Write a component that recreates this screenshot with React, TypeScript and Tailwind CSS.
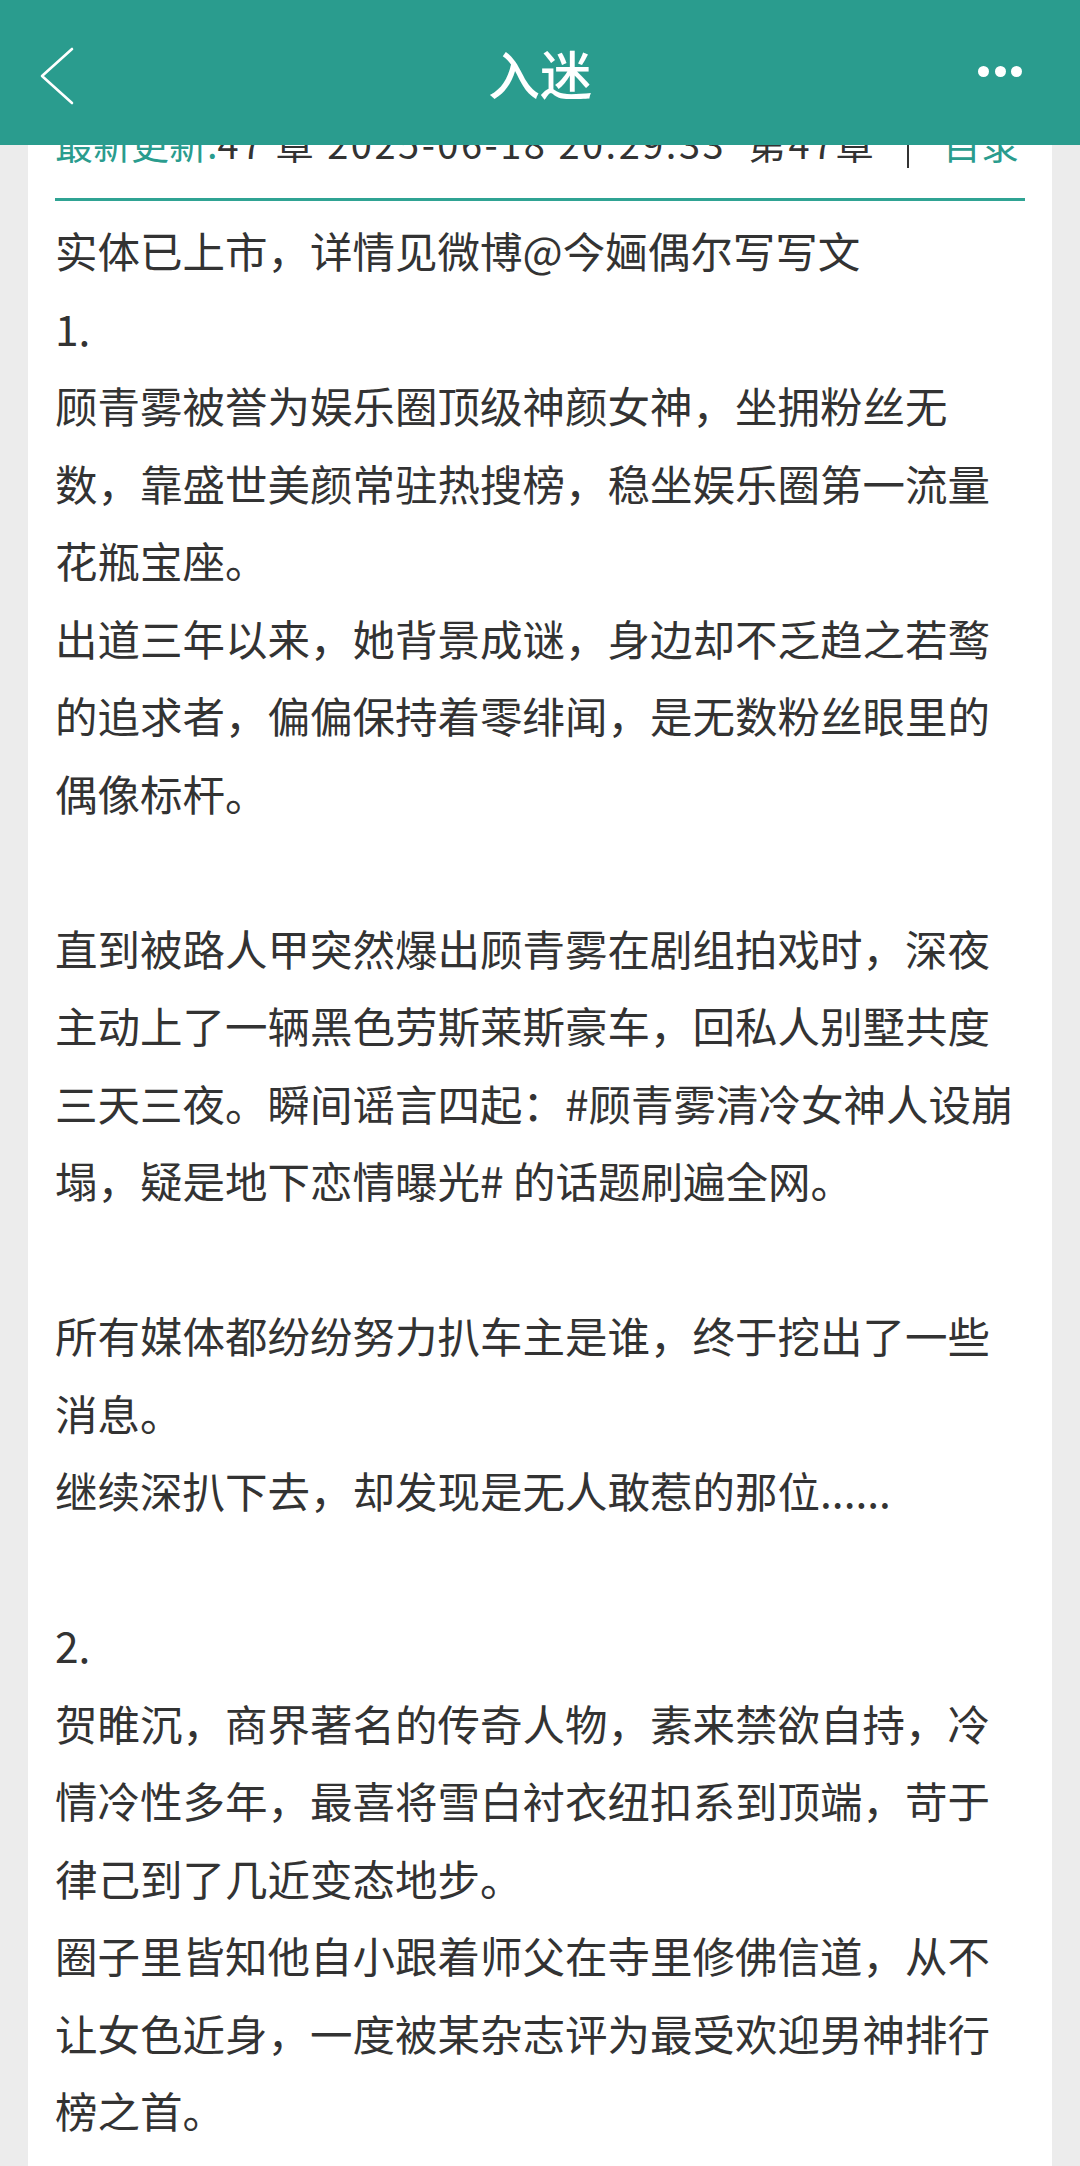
import React from 'react';

const lines: string[] = [
  '实体已上市，详情见微博@今婳偶尔写写文',
  '1.',
  '顾青雾被誉为娱乐圈顶级神颜女神，坐拥粉丝无',
  '数，靠盛世美颜常驻热搜榜，稳坐娱乐圈第一流量',
  '花瓶宝座。',
  '出道三年以来，她背景成谜，身边却不乏趋之若鹜',
  '的追求者，偏偏保持着零绯闻，是无数粉丝眼里的',
  '偶像标杆。',
  '',
  '直到被路人甲突然爆出顾青雾在剧组拍戏时，深夜',
  '主动上了一辆黑色劳斯莱斯豪车，回私人别墅共度',
  '三天三夜。瞬间谣言四起：#顾青雾清冷女神人设崩',
  '塌，疑是地下恋情曝光# 的话题刷遍全网。',
  '',
  '所有媒体都纷纷努力扒车主是谁，终于挖出了一些',
  '消息。',
  '继续深扒下去，却发现是无人敢惹的那位......',
  '',
  '2.',
  '贺睢沉，商界著名的传奇人物，素来禁欲自持，冷',
  '情冷性多年，最喜将雪白衬衣纽扣系到顶端，苛于',
  '律己到了几近变态地步。',
  '圈子里皆知他自小跟着师父在寺里修佛信道，从不',
  '让女色近身，一度被某杂志评为最受欢迎男神排行',
  '榜之首。',
];

function Header() {
  return (
    <div className="fixed top-0 left-0 right-0 z-10 h-[145px] bg-[#2a9c8e] flex items-center justify-between pl-[20px] pr-[58px]">
      <svg width="60" height="70" viewBox="0 0 60 70" className="-mt-[3px]">
        <path d="M52 13 L22 40 L52 67" fill="none" stroke="#ffffff" strokeWidth="2.6" strokeLinecap="round" strokeLinejoin="round" />
      </svg>
      <h1 className="absolute left-0 right-0 text-center text-white text-[52px] font-medium leading-none pointer-events-none">
        入迷
      </h1>
      <div className="flex items-center gap-[5.5px] -mt-[2px]">
        <span className="w-[11px] h-[11px] rounded-full bg-white"></span>
        <span className="w-[11px] h-[11px] rounded-full bg-white"></span>
        <span className="w-[11px] h-[11px] rounded-full bg-white"></span>
      </div>
    </div>
  );
}

export default function App() {
  return (
    <div
      className="h-[2166px] overflow-hidden bg-[#ececec] px-[28px]"
      style={{ fontFamily: '"Noto Sans CJK SC", "Noto Sans", sans-serif' }}
    >
      <Header />
      <div className="bg-white h-full px-[27px] pt-[118px]">
        {/* update info row, partly under the header */}
        <div className="flex items-center h-[50px] text-[38px] leading-[50px] whitespace-nowrap">
          <span className="text-[#2a9c8e]">最新更新:</span>
          <span className="text-[#333333] tracking-[2.5px]">47 章 2025-06-18 20:29:33 &nbsp;第47章</span>
          <span className="flex-1"></span>
          <span className="w-[2px] h-[50px] bg-[#333333] mr-[34px]"></span>
          <span className="text-[#2a9c8e] pr-[6px]">目录</span>
        </div>
        <div className="mt-[30px] h-[3px] bg-[#2fa393]"></div>

        {/* chapter text */}
        <div className="mt-[10px] text-[42.5px] leading-[77.5px] text-[#333333]">
          {lines.map((line, i) => (
            <div key={i} className="h-[77.5px] whitespace-nowrap">
              {line || '\u00a0'}
            </div>
          ))}
        </div>
      </div>
    </div>
  );
}
